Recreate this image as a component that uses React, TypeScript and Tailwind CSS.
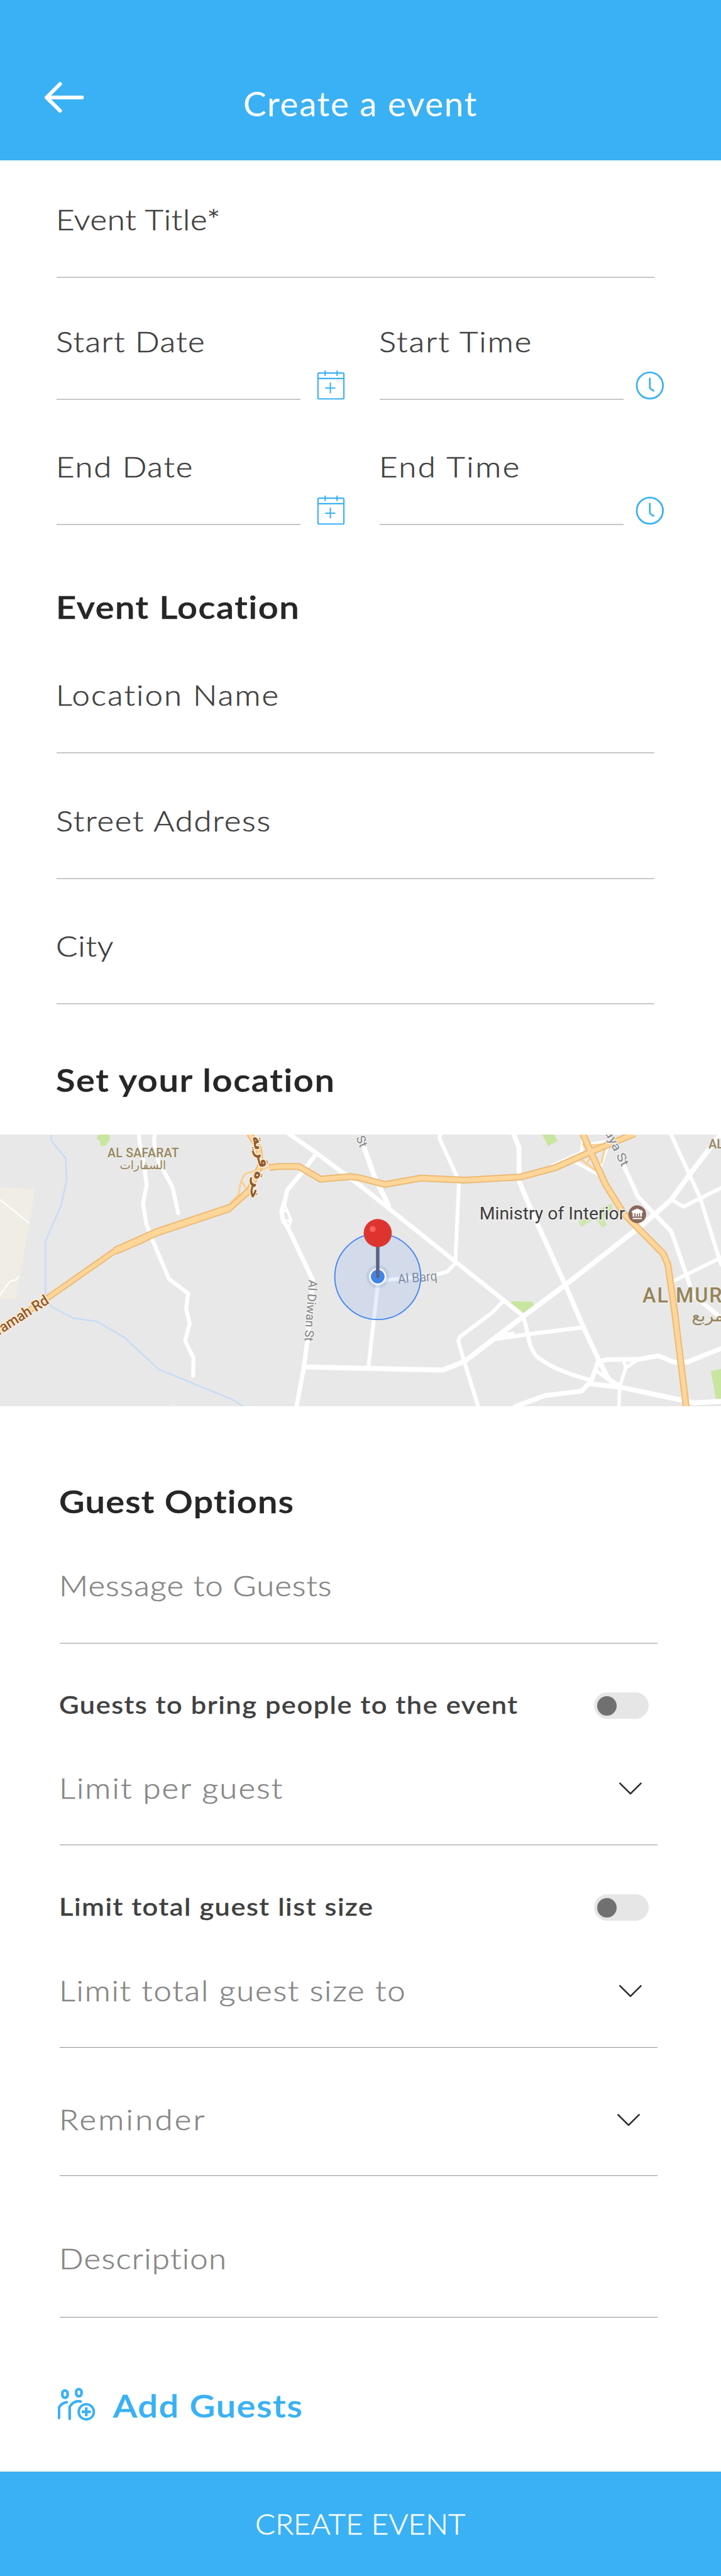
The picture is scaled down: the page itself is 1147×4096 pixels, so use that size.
import type { ReactNode } from 'react';

const BLUE = '#3ab1f4';

/* ---------- Icons ---------- */

function BackArrow() {
  return (
    <svg className="h-[54px] w-[68px]" viewBox="74 138 74 59" fill="none" stroke="#fff" strokeWidth="6.5" strokeLinecap="round" strokeLinejoin="round">
      <path d="M104 144 80.5 167.5 104 190.5M81 167.5H142" />
    </svg>
  );
}

function CalendarPlus() {
  return (
    <svg className="h-12 w-[46px] shrink-0" viewBox="545 636 50 52" fill="none" stroke={BLUE} strokeWidth="2.3">
      <rect x="547" y="641.5" width="44.8" height="44.7" rx="2" />
      <path d="M547 651H592M559.4 637V646.5M580 637V646.5M559.5 667.4H577M568.4 658V676.5" />
    </svg>
  );
}

function Clock() {
  return (
    <svg className="-mb-px h-12 w-12 shrink-0" viewBox="1093 637 52 52" fill="none" stroke={BLUE} strokeWidth="3" strokeLinecap="round">
      <circle cx="1118.8" cy="663" r="22.6" />
      <path d="M1118.8 651V666.5C1119 669 1121.5 670 1125.3 672" />
    </svg>
  );
}

function Chevron() {
  return (
    <svg className="h-[24px] w-[40px]" viewBox="0 0 43.3 26" fill="none" stroke="#2b2b2b" strokeWidth="2.8" strokeLinecap="round" strokeLinejoin="round">
      <path d="M3.6 4 21.6 21.8 39.6 4" />
    </svg>
  );
}

function GuestsIcon() {
  return (
    <svg className="h-[57px] w-[65px]" viewBox="30 44.5 70.4 61.7" fill="none" stroke={BLUE} strokeWidth="4.6" strokeLinecap="round">
      <rect x="37.8" y="54.3" width="9" height="12.4" rx="4.5" />
      <rect x="61.6" y="52" width="9.2" height="12.2" rx="4.5" />
      <path d="M32 101.5V83.5C35.500 77.500 39.500 74.800 45.400 74.300M50.400 103V82.500C54 76.500 60.500 71.500 69.600 73.200" />
      <circle cx="79" cy="91" r="13.1" strokeWidth="4.2" />
      <path d="M79 83.3V98.7M71.2 91H86.8" strokeLinecap="butt" />
    </svg>
  );
}

/* ---------- Map ---------- */

const streets: [string, number][] = [
  ['M605 39C602 70 612 110 622 160L638 300 622 395 636 500 660 575 735 785 818 860 810 940 825 1015 805 1105 842 1195 840 1285', 6.3],
  ['M675 39C665 60 672 110 690 180L750 310 775 445', 6.3],
  ['M1250 30 1380 138 1580 315 2275 975', 7],
  ['M1375 140 1310 240 1250 325 1235 400 1224 435 1232 485 1252 520 1360 790 1335 1120 1322 1240 1290 1445', 7],
  ['M1238 400 1252 440 1266 482 1256 520M1228 435H1248M1232 484H1262', 4],
  ['M1322 1240 1560 1246 1925 1256 2020 1212 2280 975 2460 815 2800 500 2920 375 3000 245 3136 35', 8],
  ['M1585 110 1630 260 1690 405', 8],
  ['M1915 39 1912 60 1985 250 1996 290 1980 705 1945 748 1895 765 1700 788 1645 800 1602 1245', 6],
  ['M2235 39 2257 105 2258 280 2300 400 2345 520 2460 820 2540 1040 2605 1205 2645 1300 2690 1345', 7.6],
  ['M2185 905 2140 960 2000 1085 1993 1105 2020 1215 2080 1445', 6.2],
  ['M2275 975 2290 1040 2303 1115C2315 1160 2330 1185 2345 1195 2400 1245 2480 1280 2560 1305', 6.5],
  ['M2160 1095 2300 1070 2540 1035M2160 1080 2230 1068', 6.5],
  ['M2600 1215 2640 1202 2780 1200 2865 1182 2930 1215 2990 1215 3136 1145', 7.5],
  ['M2600 1220 2572 1310 2530 1365 2370 1388 2240 1445', 7.5],
  ['M2572 1328 2700 1345 2960 1410 3020 1425 3136 1418', 8],
  ['M2605 1220 2655 1305 2700 1340M2715 1215 2722 1240 2695 1345 2692 1445M2770 1205 2722 1245M2600 1265 2640 1300', 5.5],
  ['M2715 205 2775 360 2855 460 2920 540 2990 780 3015 870 3136 985', 6.8],
  ['M2915 30 3045 365 3136 710', 6.2],
  ['M2920 375 2972 412 3136 315', 6],
  ['M2930 795 3136 675', 6],
  ['M2535 55 2530 130 2400 200M2500 180 2600 245 2625 160 2640 110M2560 90 2640 75', 5],
];

const highways: [string, number][] = [
  ['M-20 1065 205 885 500 640 610 590 680 545 1000 418 1085 330', 10],
  ['M500 640 555 612 680 545 1000 418', 13],
  ['M1000 418 1085 325 1110 260 1135 190 1125 110 1085 35', 10],
  ['M1172 210 1210 204 1300 204 1395 270 1525 256 1568 264 1675 297 1830 264 2020 275 2265 258 2415 210 2570 128 2760 35', 11],
  ['M2535 35 2570 130 2635 300 2715 450 2885 655 2905 710 2935 960 2985 1450', 11],
];

const ramps = 'M1118 225 1070 240C1050 260 1042 300 1038 350L1000 395M1050 280 1075 325M1135 200 1175 190M1130 225 1175 205M2535 85 2545 110M2560 95 2640 88M2635 95 2615 190M2525 165 2590 225M2570 150 2550 195';

function MapView() {
  return (
    <div className="relative h-[432px] w-full shrink-0 overflow-hidden bg-[#e8e8e8]">
      <svg className="absolute inset-0 h-full w-full" viewBox="0 39 3136 1404" preserveAspectRatio="none" fill="none" strokeLinejoin="round">
        <path d="M0 310 152 323 125 520 68 888H0Z" fill="#f0ede4" />
        <path d="M740 1428 770 1436 765 1443H740Z" fill="#f0ede4" />
        <path d="M0 375 128 498M82 770 70 790 42 798 0 870" stroke="#fff" strokeWidth="2" vectorEffect="non-scaling-stroke" />
        <g fill="#c8e6a0">
          <path d="M428 39H475L478 65 460 96 438 98 435 72 420 58Z" />
          <path d="M2358 39H2410L2426 72 2384 98Z" />
          <path d="M2225 900 2315 903 2324 925 2270 968 2222 915Z" />
          <path d="M3092 1262 3136 1250V1412L3115 1414Z" />
          <path d="M2515 482 2570 462 2578 480 2528 517ZM2592 480 2622 440 2612 420 2660 395 2668 430 2625 470 2640 505 2620 520Z" opacity=".75" />
        </g>
        <path d="M223 39V70L286 162 290 275 266 405 198 590V860L222 928 320 988 422 1005 540 1087 690 1252 1010 1408 1060 1445" stroke="#c5dbf8" strokeWidth="2.3" vectorEffect="non-scaling-stroke" />
        {streets.map(([d, w]) => (
          <path key={d} d={d} stroke="#fff" strokeWidth={w} strokeLinecap="round" vectorEffect="non-scaling-stroke" />
        ))}
        <path d={ramps} stroke="#fbd08e" strokeWidth="3" vectorEffect="non-scaling-stroke" />
        {highways.map(([d, w]) => (
          <path key={d} d={d} stroke="#ecba76" strokeWidth={w} vectorEffect="non-scaling-stroke" />
        ))}
        {highways.map(([d, w]) => (
          <path key={d} d={d} stroke="#ffd699" strokeWidth={w - 4} vectorEffect="non-scaling-stroke" />
        ))}
      </svg>

      <svg className="absolute inset-0 h-full w-full font-['Roboto','DejaVu_Sans',sans-serif]" viewBox="0 0 1242 468" strokeLinejoin="round">
        <g fill="#96865f" fontWeight="500" stroke="#ecebe7" strokeWidth="3" paintOrder="stroke">
          <text x="185" y="38.5" fontSize="21" textLength="123">AL SAFARAT</text>
          <text x="206" y="60" fontSize="20" fontWeight="400" textLength="80" lengthAdjust="spacingAndGlyphs">السفارات</text>
          <text x="1221" y="24" fontSize="21">AL</text>
        </g>
        <g fill="#8f5a2b" fontWeight="500" stroke="#fdebd3" strokeWidth="4" paintOrder="stroke">
          <text transform="translate(-2 346) rotate(-32.5)" fontSize="25" textLength="104" lengthAdjust="spacingAndGlyphs">ramah Rd</text>
          <text transform="translate(434 4) rotate(76)" fontSize="25" fontWeight="700">قرية</text>
          <text transform="translate(441 62) rotate(106)" fontSize="25" fontWeight="700">خرة</text>
        </g>
        <g fill="#858585" fontSize="21" stroke="#f1f1f1" strokeWidth="3" paintOrder="stroke">
          <text transform="translate(532 250) rotate(94)" textLength="106" lengthAdjust="spacingAndGlyphs">Al Diwan St</text>
          <text transform="translate(606 -12) rotate(68)">A St</text>
          <text transform="translate(1042 -4) rotate(64)" textLength="67" lengthAdjust="spacingAndGlyphs">aya St</text>
        </g>
        <text x="826" y="146" fontSize="30" fill="#403d3b" stroke="#f0f0f0" strokeWidth="3" paintOrder="stroke" textLength="251" lengthAdjust="spacingAndGlyphs">Ministry of Interior</text>
        <text x="1107" y="289.5" fontSize="35" fontWeight="500" fill="#94845a" stroke="#efede8" strokeWidth="3" paintOrder="stroke" textLength="137">AL MUR</text>
        <text x="1192" y="322" fontSize="29" fill="#94845a">مربع</text>

        <circle cx="1098" cy="137.3" r="15.3" fill="#8a675c" />
        <path d="M1088.5 131.500 1098 127.500 1107.5 131.500V134.500H1106V141.500H1090V134.500H1088.5ZM1090 143.500H1106V145.700H1090Z" fill="#fff" />
        <path d="M1094 135.500V141.600M1098 136.500V141.600M1102 135.500V141.600" stroke="#8a675c" strokeWidth="2" />

        <text transform="translate(686 257) rotate(-5)" fontSize="23" fill="#8a8d98" stroke="#f1f1f1" strokeWidth="2" paintOrder="stroke" textLength="68" lengthAdjust="spacingAndGlyphs">Al Barq</text>
        <circle cx="650.7" cy="244.7" r="74" fill="#4285f4" fillOpacity=".13" stroke="#4285f4" strokeWidth="2" />
        <circle cx="650.7" cy="244.7" r="20" fill="#4a6aa5" fillOpacity=".12" />
        <circle cx="650.7" cy="244.7" r="13.2" fill="#4285e8" stroke="#fff" strokeWidth="2.7" />
        <path d="M650.7 190V244.5" stroke="#5a6486" strokeWidth="6" strokeLinecap="round" />
        <circle cx="650.7" cy="169.7" r="24.2" fill="#de342f" />
        <circle cx="642" cy="162.7" r="5.2" fill="#f8625f" />
      </svg>
    </div>
  );
}

/* ---------- Form pieces ---------- */

const light = '-ml-px origin-left scale-x-[1.13] whitespace-nowrap text-[45px] leading-none font-light [-webkit-text-stroke:0.6px]';
const heading = '-ml-px origin-left scale-x-[1.12] whitespace-nowrap text-[50px] leading-none font-semibold [-webkit-text-stroke:0.5px]';
const strong = '-ml-px origin-left scale-x-[1.14] whitespace-nowrap text-[38px] leading-none font-medium text-[#404040] [-webkit-text-stroke:0.4px]';

function Field({ className, track, children }: { className: string; track: string; children: ReactNode }) {
  return (
    <div className={`flex shrink-0 items-end border-b-2 border-[#c8c8c8] pb-[68px] ${className}`}>
      <span className={`${light} ${track}`}>{children}</span>
    </div>
  );
}

function Option({ className, track, chevron, children }: { className: string; track: string; chevron?: string; children: ReactNode }) {
  return (
    <div className={`flex items-end justify-between border-b border-[#929292] text-[#868686] ${className}`}>
      <span className={`${light} ${track}`}>{children}</span>
      {chevron && <span className={chevron}><Chevron /></span>}
    </div>
  );
}

function ToggleRow({ className, track, children }: { className: string; track: string; children: ReactNode }) {
  return (
    <div className={`flex items-end justify-between pr-[14px] ${className}`}>
      <span className={`mb-1 ${strong} ${track}`}>{children}</span>
      <button className="flex h-[42px] w-[87px] shrink-0 items-center rounded-full bg-[#e6e6e6] pl-[5px]">
        <span className="h-[31px] w-[31px] rounded-full bg-[#707070]" />
      </button>
    </div>
  );
}

export default function App() {
  return (
    <div className="flex h-[4096px] w-[1147px] flex-col overflow-hidden bg-white font-['Lato',sans-serif]">
      <header className="grid h-[255px] shrink-0 grid-cols-[1fr_auto_1fr] items-end bg-[#3ab1f4] text-white">
        <div className="mb-[73px] pl-[68px]"><BackArrow /></div>
        <h1 className="mb-[63px] text-[55px] leading-none tracking-[1.6px] whitespace-nowrap">Create a event</h1>
      </header>

      <section className="flex shrink-0 flex-col pr-[106px] pl-[90px] text-[#404040]">
        <Field className="h-[187px]" track="tracking-[0.7px]">Event Title*</Field>
        <div className="-mr-20 flex h-[194px] items-end">
          <Field className="h-full w-[388px]" track="tracking-[1.3px]">Start Date</Field>
          <div className="ml-[26px]"><CalendarPlus /></div>
          <Field className="ml-[54px] h-full w-[388px]" track="tracking-[1.8px]">Start Time</Field>
          <div className="ml-[18px]"><Clock /></div>
        </div>
        <div className="-mr-20 flex h-[199px] items-end">
          <Field className="h-full w-[388px]" track="tracking-[1.6px]">End Date</Field>
          <div className="ml-[26px]"><CalendarPlus /></div>
          <Field className="ml-[54px] h-full w-[388px]" track="tracking-[2.3px]">End Time</Field>
          <div className="ml-[18px]"><Clock /></div>
        </div>

        <div className="flex h-[155px] items-end text-[#262626]">
          <h2 className={`${heading} tracking-[1.4px]`}>Event Location</h2>
        </div>
        <Field className="h-[208px]" track="tracking-[1.9px]">Location Name</Field>
        <Field className="h-[200px]" track="tracking-[1.6px]">Street Address</Field>
        <Field className="h-[199px]" track="tracking-[0.8px]">City</Field>
        <div className="flex h-[145px] items-end text-[#262626]">
          <h2 className={`${heading} tracking-[1.5px]`}>Set your location</h2>
        </div>
      </section>

      <div className="mt-[62px] flex shrink-0"><MapView /></div>

      <section className="flex shrink-0 flex-col pr-[101px] pl-[95px]">
        <div className="flex h-[176px] items-end text-[#262626]">
          <h2 className={`${heading} tracking-[1.1px]`}>Guest Options</h2>
        </div>
        <Field className="h-[202px] text-[#868686]" track="tracking-[0.9px]">Message to Guests</Field>
        <ToggleRow className="h-[119px]" track="tracking-[1.4px]">Guests to bring people to the event</ToggleRow>
        <Option className="h-[201px] pb-[67px]" track="tracking-[1.9px]" chevron="mr-[23px] mb-[10px]">Limit per guest</Option>
        <ToggleRow className="h-[120px]" track="tracking-[1.4px]">Limit total guest list size</ToggleRow>
        <Option className="h-[202px] pb-[67px]" track="tracking-[1.6px]" chevron="mr-[23px] mb-[10px]">Limit total guest size to</Option>
        <Option className="h-[204px] pb-[66px]" track="tracking-[2.9px]" chevron="mr-[26px] mb-[10px]">Reminder</Option>
        <Option className="h-[225px] pb-[70px]" track="tracking-[1.2px]">Description</Option>
        <div className="-ml-[3px] flex h-[165px] items-end gap-[24px] text-[#3ab1f4]">
          <div className="mb-px"><GuestsIcon /></div>
          <span className={`${heading} tracking-[1.5px]`}>Add Guests</span>
        </div>
      </section>

      <button className="mt-auto flex h-[166px] w-full shrink-0 items-end justify-center bg-[#3ab1f4] pb-[60px] text-white">
        <span className="scale-x-105 text-[45px] leading-none font-light tracking-[0.2px] [-webkit-text-stroke:0.6px]">CREATE EVENT</span>
      </button>
    </div>
  );
}
